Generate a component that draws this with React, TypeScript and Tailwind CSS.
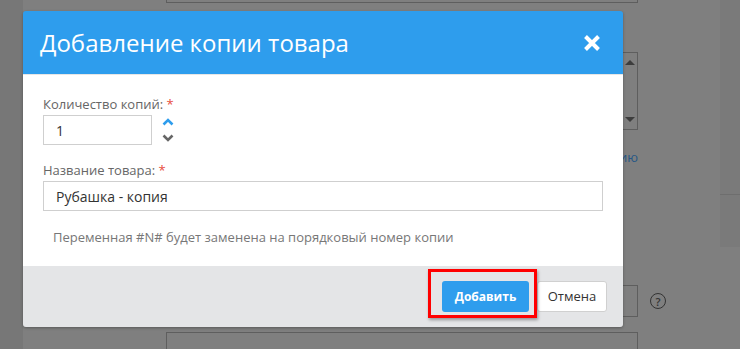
import React from "react";

const font = { fontFamily: '"Open Sans", "Noto Sans", sans-serif' };

function Chevron({ up, className }: { up?: boolean; className?: string }) {
  return (
    <svg width="12" height="8" viewBox="0 0 12 8" className={className}>
      <path
        d={up ? "M1.5 6.5 L6 2 L10.5 6.5" : "M1.5 1.5 L6 6 L10.5 1.5"}
        fill="none"
        stroke="currentColor"
        strokeWidth="2.6"
      />
    </svg>
  );
}

function Backdrop() {
  return (
    <div className="flex h-[349px] w-[740px] bg-[#7f7f7f]">
      <div className="w-[23px] shrink-0 bg-[#777777]" />
      <div className="w-[143px] shrink-0" />
      <div className="flex w-[520px] shrink-0 flex-col">
        <div className="h-[3px] w-[472px] border-x border-b border-[#5e5e5e]" />
        <div className="mt-[49px] flex h-[93px] w-[472px] justify-end border border-[#5e5e5e]">
          <div className="flex w-[14px] flex-col items-center justify-between py-[7px]">
            <div className="h-0 w-0 border-x-[5px] border-b-[5px] border-x-transparent border-b-[#3d3d3d]" />
            <div className="h-0 w-0 border-x-[5px] border-t-[5px] border-x-transparent border-t-[#3d3d3d]" />
          </div>
        </div>
        <div className="mt-[18px] w-[472px] text-right text-[13px] leading-[18px] text-[#275886]">
          Выбрать категорию
        </div>
        <div className="mt-[119px] flex items-center">
          <div className="h-[32px] w-[472px] border border-[#5e5e5e]" />
          <div className="ml-[12px] flex h-[16px] w-[16px] items-center justify-center rounded-full border-[1.5px] border-[#333] text-[11px] font-semibold leading-none text-[#333]">
            ?
          </div>
        </div>
        <div className="mt-[15px] h-[20px] w-[472px] border-x border-t border-[#5e5e5e]" />
      </div>
      <div className="w-[34px] shrink-0" />
      <div className="flex h-[247px] w-[20px] flex-col bg-[#7a7a7a]">
        <div className="h-[195px] border-b border-[#6e6e6e]" />
      </div>
    </div>
  );
}

export default function App() {
  return (
    <div className="relative h-[349px] w-[740px] overflow-hidden" style={font}>
      <Backdrop />
      <div className="absolute left-[23px] top-[11px] w-[600px] rounded-[3px] shadow-[0_1px_3px_rgba(0,0,0,0.3)]">
        <div className="flex h-[63px] items-center justify-between rounded-t-[3px] bg-[#2e9ded] pl-[17px] pr-[22px]">
          <div className="text-[24px] leading-[32px] text-white">Добавление копии товара</div>
          <svg width="18" height="18" viewBox="0 0 18 18">
            <path d="M2.5 2.5 L15.5 15.5 M15.5 2.5 L2.5 15.5" stroke="white" strokeWidth="4" />
          </svg>
        </div>
        <div className="border-t border-[#e6e6e6] bg-white px-[20px] pb-[20px] pt-[20px]">
          <div className="text-[13px] leading-[18px] text-[#666]">
            Количество копий: <span className="text-[#e74c3c]">*</span>
          </div>
          <div className="mt-[2px] flex items-start">
            <div className="flex h-[30px] w-[109px] items-center border border-[#cfcfcf] px-[12px] text-[14px] text-[#333]">
              1
            </div>
            <div className="ml-[10px] flex flex-col pt-[3px]">
              <Chevron up className="text-[#2e9ded]" />
              <Chevron className="mt-[8px] text-[#666]" />
            </div>
          </div>
          <div className="mt-[16px] text-[13px] leading-[18px] text-[#666]">
            Название товара: <span className="text-[#e74c3c]">*</span>
          </div>
          <div className="mt-[2px] flex h-[30px] w-full items-center border border-[#cfcfcf] px-[12px] text-[14px] text-[#333]">
            Рубашка - копия
          </div>
          <div className="mt-[17px] pl-[10px] text-[13px] leading-[18px] text-[#777]">
            Переменная #N# будет заменена на порядковый номер копии
          </div>
        </div>
        <div className="flex h-[61px] items-center justify-end gap-[8px] rounded-b-[3px] bg-[#e4e5e7] pr-[16px]">
          <div className="relative">
            <div className="absolute -bottom-[6px] -left-[14px] -right-[8px] -top-[12px] border-[3px] border-[#ff0000] shadow-[1px_2px_3px_rgba(0,0,0,0.35)]" />
            <button className="relative flex h-[31px] w-[87px] items-center justify-center rounded-[3px] bg-[#2e9ded] text-[12px] font-bold text-white">
              Добавить
            </button>
          </div>
          <button className="flex h-[31px] w-[70px] items-center justify-center rounded-[3px] border border-[#d0d0d0] bg-white text-[13px] text-[#333]">
            Отмена
          </button>
        </div>
      </div>
    </div>
  );
}
